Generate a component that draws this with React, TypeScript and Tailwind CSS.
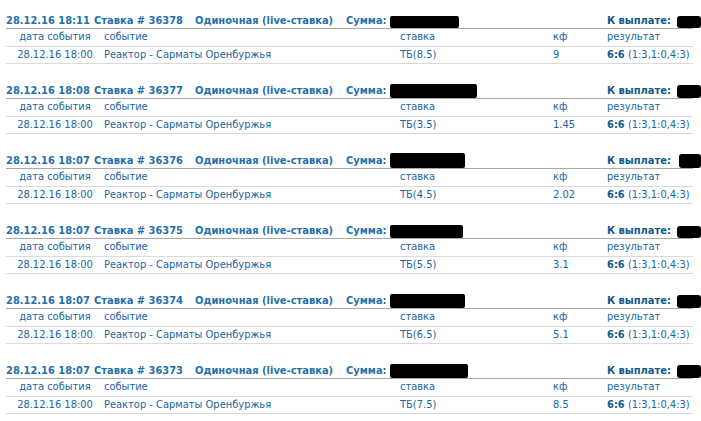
import React from "react";

type Bet = {
  time: string;
  id: string;
  stake: string;
  kf: string;
  sum: string; // size of the redaction blob
  pay: string;
};

const bets: Bet[] = [
  { time: "28.12.16 18:11", id: "36378", stake: "ТБ(8.5)", kf: "9", sum: "w-[69px] h-[12px]", pay: "w-[24px] h-[12px]" },
  { time: "28.12.16 18:08", id: "36377", stake: "ТБ(3.5)", kf: "1.45", sum: "w-[87px] h-[14px]", pay: "w-[24px] h-[13px]" },
  { time: "28.12.16 18:07", id: "36376", stake: "ТБ(4.5)", kf: "2.02", sum: "w-[75px] h-[15px]", pay: "w-[22px] h-[14px]" },
  { time: "28.12.16 18:07", id: "36375", stake: "ТБ(5.5)", kf: "3.1", sum: "w-[73px] h-[13px]", pay: "w-[24px] h-[12px]" },
  { time: "28.12.16 18:07", id: "36374", stake: "ТБ(6.5)", kf: "5.1", sum: "w-[75px] h-[14px]", pay: "w-[24px] h-[13px]" },
  { time: "28.12.16 18:07", id: "36373", stake: "ТБ(7.5)", kf: "8.5", sum: "w-[78px] h-[14px]", pay: "w-[24px] h-[13px]" },
];

const BetBlock = ({ bet }: { bet: Bet }) => (
  <div className="mb-[19px]">
    {/* header */}
    <div className="flex h-[16px] items-end border-b border-[#a9a9a9] text-[11px] font-bold leading-[15px] text-[#2470ac]">
      <span className="w-[88px] whitespace-nowrap">{bet.time}</span>
      <span className="w-[101px] whitespace-nowrap">Ставка # {bet.id}</span>
      <span className="w-[151px] whitespace-nowrap">Одиночная (live-ставка)</span>
      <span className="whitespace-nowrap">Сумма:</span>
      <span className={`ml-[3px] self-end rounded-[2px] bg-black ${bet.sum}`} />
      <span className="flex-1" />
      <span className="mr-[-8px] flex w-[94px] items-end whitespace-nowrap text-[#0f5a8e]">
        К выплате:
        <span className={`ml-auto rounded-[3px] bg-black ${bet.pay}`} />
      </span>
    </div>
    {/* column titles */}
    <div className="flex h-[18px] items-center border-b border-[#dadada] text-[11px] text-[#1b65a0]">
      <span className="w-[98px] text-center">дата события</span>
      <span className="w-[296px]">событие</span>
      <span className="w-[153px]">ставка</span>
      <span className="w-[54px]">кф</span>
      <span>результат</span>
    </div>
    {/* data */}
    <div className="flex h-[17px] items-center border-b border-[#dadada] text-[11px] text-[#1b65a0]">
      <span className="w-[98px] text-center">28.12.16 18:00</span>
      <span className="w-[296px]">Реактор - Сарматы Оренбуржья</span>
      <span className="w-[153px]">{bet.stake}</span>
      <span className="w-[54px]">{bet.kf}</span>
      <span>
        <b className="text-[#0f5a8e]">6:6</b> (1:3,1:0,4:3)
      </span>
    </div>
  </div>
);

export default function App() {
  return (
    <div
      className="h-[421px] w-[701px] overflow-hidden bg-white pl-[6px] pr-[8px] pt-[13px]"
      style={{ fontFamily: "Tahoma, 'DejaVu Sans Condensed', 'DejaVu Sans', sans-serif" }}
    >
      {bets.map((b) => (
        <BetBlock key={b.id} bet={b} />
      ))}
    </div>
  );
}
